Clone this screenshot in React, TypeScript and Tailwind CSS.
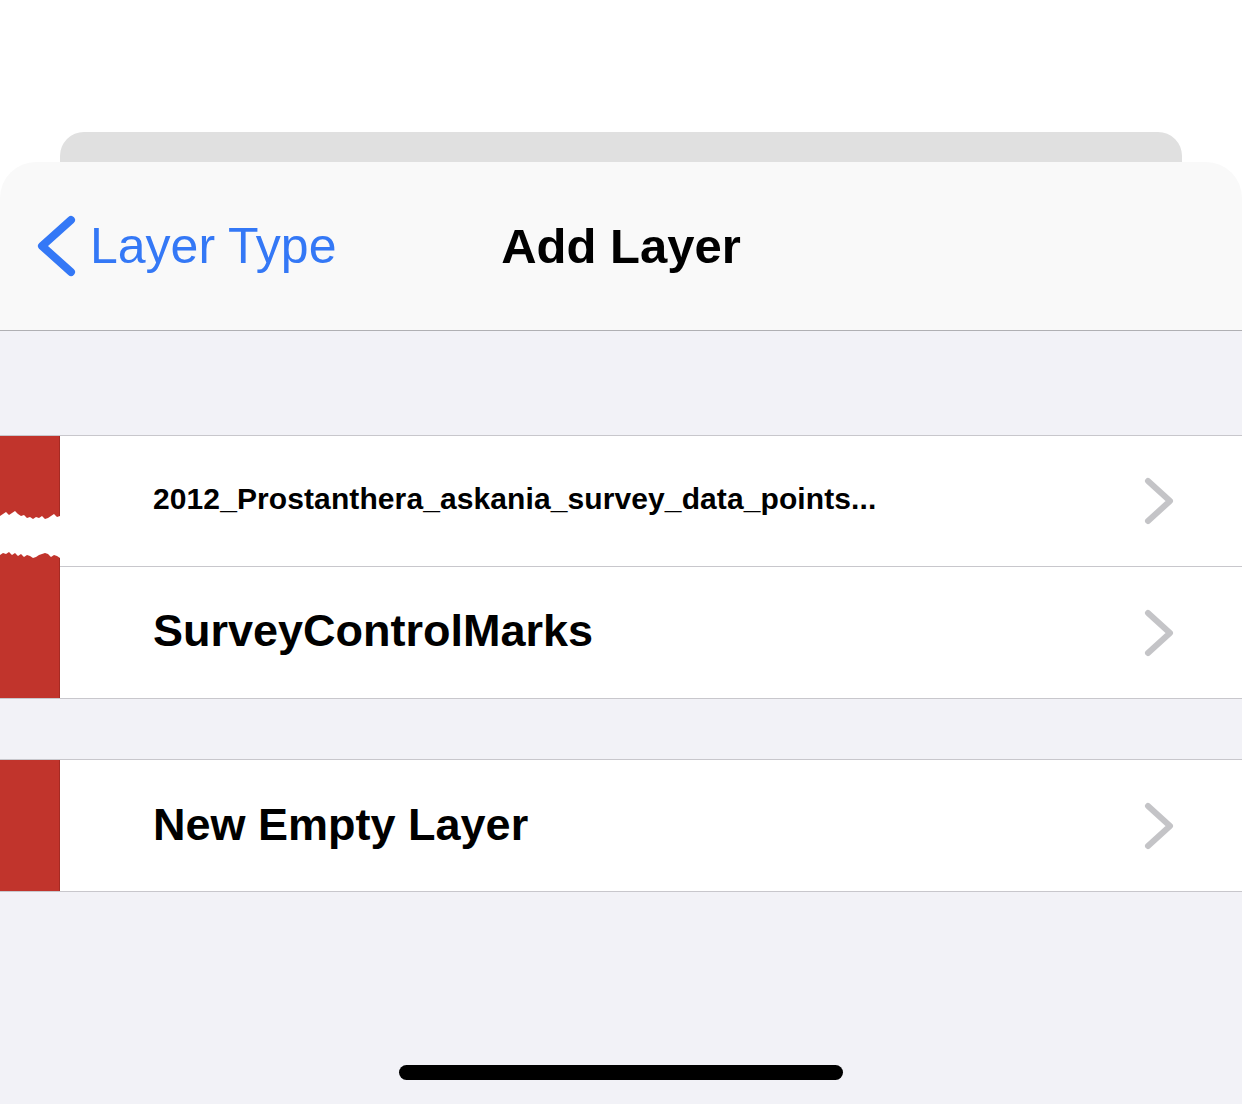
import { ReactNode } from "react";

const font = { fontFamily: '"Liberation Sans", Arial, sans-serif' };

function Chevron() {
  return (
    <svg width="34" height="48" viewBox="0 0 34 48" className="shrink-0">
      <path d="M6 4 L28 24 L6 44" fill="none" stroke="#c4c4c7" strokeWidth="6" strokeLinecap="round" strokeLinejoin="round" />
    </svg>
  );
}

function Torn() {
  // jagged white band across the red marker
  const top =
    "0,80 3,78 6,76 9,79 12,77 15,75 18,78 21,80 24,79 27,82 30,81 33,83 36,81 39,82 42,80 45,83 48,82 51,80 54,78 57,81 60,80";
  const bottom =
    "60,122 57,120 54,119 51,121 48,118 45,117 42,118 39,119 36,121 33,122 30,120 27,119 24,121 21,118 18,120 15,117 12,119 9,116 6,118 3,117 0,119";
  return (
    <svg className="absolute inset-0" width="60" height="131" viewBox="0 0 60 131">
      <polygon points={`${top} ${bottom}`} fill="#ffffff" />
    </svg>
  );
}

function Row({ children, last, torn, size }: { children: ReactNode; last?: boolean; torn?: boolean; size: string }) {
  return (
    <div className="flex h-[131px]">
      <div className="relative w-[60px] shrink-0 bg-[#c1342c] border-r border-[#a52a23]">{torn && <Torn />}</div>
      <div className={`flex flex-1 items-center justify-between pl-[93px] pr-[66px] bg-white ${last ? "" : "border-b border-[#c8c7cc]"}`}>
        <span className={`font-bold text-black ${size}`}>{children}</span>
        <Chevron />
      </div>
    </div>
  );
}

export default function App() {
  return (
    <div className="w-[1242px] h-[1104px] bg-white flex flex-col overflow-hidden" style={font}>
      <div className="h-[132px] shrink-0" />
      <div className="h-[30px] shrink-0 mx-[60px] rounded-t-[24px] bg-[#e0e0e0]" />
      <div className="h-[169px] shrink-0 rounded-t-[36px] bg-[#f9f9f9] border-b border-[#b0b0b3] flex items-center relative">
        <div className="flex items-center pl-[36px] gap-[12px] text-[#3478f6]">
          <svg width="42" height="64" viewBox="0 0 42 64">
            <path d="M35 6 L6 32 L35 58" fill="none" stroke="#3478f6" strokeWidth="8" strokeLinecap="round" strokeLinejoin="round" />
          </svg>
          <span className="text-[50px] leading-none">Layer Type</span>
        </div>
        <div className="absolute inset-x-0 text-center text-[49px] font-bold leading-none text-black pointer-events-none">
          Add Layer
        </div>
      </div>
      <div className="flex-1 bg-[#f2f2f7] flex flex-col">
        <div className="h-[104px]" />
        <div className="border-t border-b border-[#c8c7cc]">
          <Row torn size="text-[30px] pb-[6px] tracking-[0.1px]">2012_Prostanthera_askania_survey_data_points...</Row>
          <Row last size="text-[45px] pb-[3px]">SurveyControlMarks</Row>
        </div>
        <div className="h-[60px]" />
        <div className="border-t border-b border-[#c8c7cc]">
          <Row last size="text-[45px] pb-[2px]">New Empty Layer</Row>
        </div>
        <div className="flex-1 flex items-end justify-center pb-[24px]">
          <div className="w-[444px] h-[15px] rounded-full bg-black" />
        </div>
      </div>
    </div>
  );
}
